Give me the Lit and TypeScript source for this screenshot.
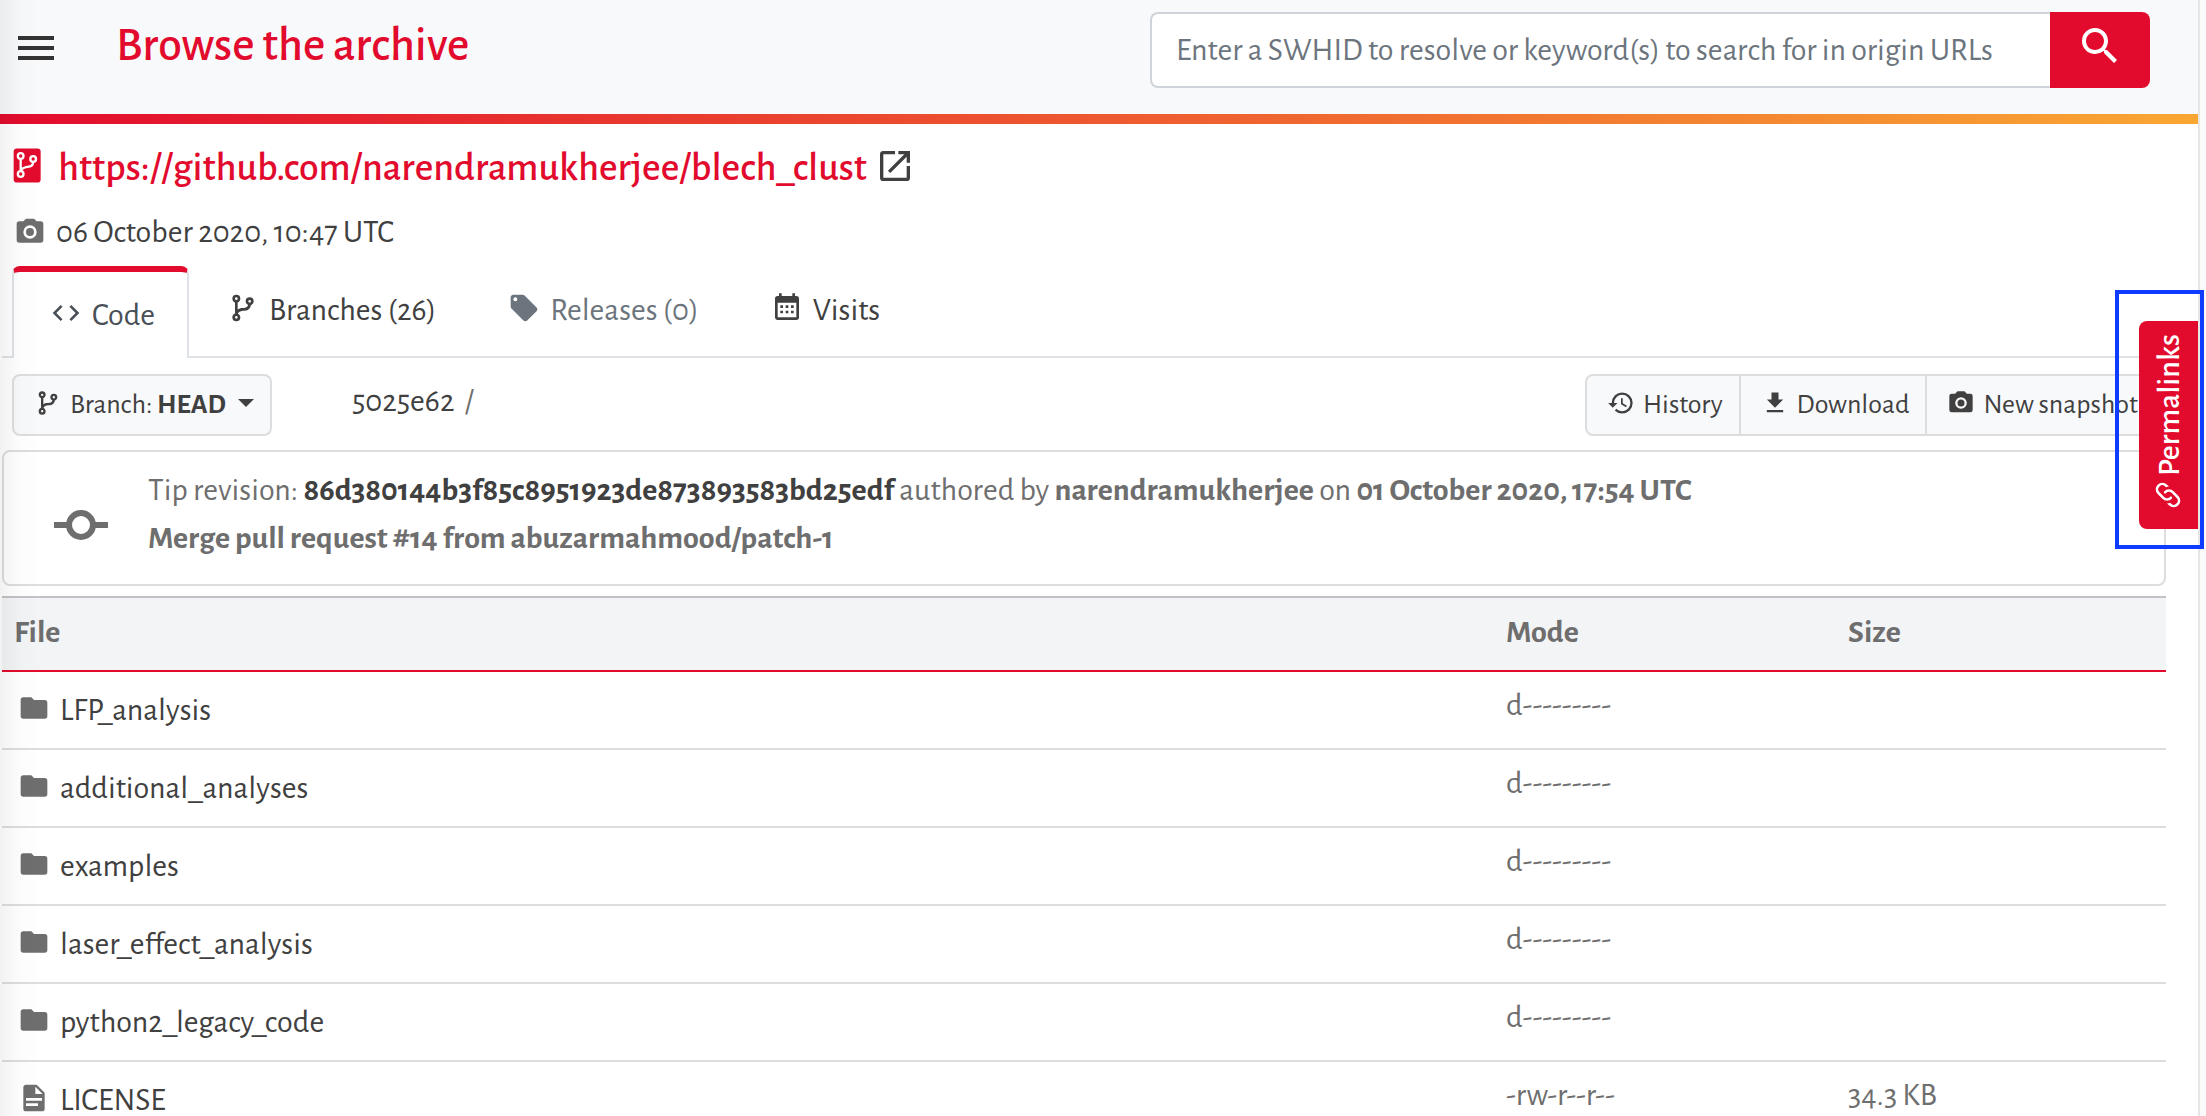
import { LitElement, html, css, svg } from "lit";
import { customElement } from "lit/decorators.js";

type IconName =
  | "menu" | "search" | "repo" | "camera" | "external" | "code" | "branch"
  | "tag" | "calendar" | "history" | "download" | "commit" | "folder" | "file" | "link";

const shapes: Record<IconName, unknown> = {
  menu: svg`<path d="M3 6h18v2H3zM3 11h18v2H3zM3 16h18v2H3z"/>`,
  search: svg`<path d="M9.500 3A6.500 6.500 0 0 1 16 9.500c0 1.610-.590 3.090-1.560 4.230l.270.270h.790l5 5-1.500 1.500-5-5v-.790l-.270-.270A6.516 6.516 0 0 1 9.500 16 6.500 6.500 0 0 1 3 9.500 6.500 6.500 0 0 1 9.500 3m0 2C7 5 5 7 5 9.500S7 14 9.500 14 14 12 14 9.500 12 5 9.500 5z"/>`,
  repo: svg`<rect x="2.200" y="1.500" width="16.200" height="20.400" rx="2"/><g fill="none" stroke="#fff" stroke-width="1.400"><circle cx="6.400" cy="6" r="1.700"/><circle cx="13.900" cy="7.800" r="1.700"/><circle cx="6.400" cy="16.800" r="1.700"/><path d="M6.400 7.700v7.400M13.900 9.500c0 3.200-2.600 2.700-5 3.400-1.500.5-2.300 1.200-2.500 2.200"/></g>`,
  camera: svg`<path d="M4 4h3l2-2h6l2 2h3a2 2 0 0 1 2 2v12a2 2 0 0 1-2 2H4a2 2 0 0 1-2-2V6a2 2 0 0 1 2-2m8 3a5 5 0 0 0-5 5 5 5 0 0 0 5 5 5 5 0 0 0 5-5 5 5 0 0 0-5-5m0 2a3 3 0 0 1 3 3 3 3 0 0 1-3 3 3 3 0 0 1-3-3 3 3 0 0 1 3-3z"/>`,
  external: svg`<path d="M14 3v2h3.590l-9.830 9.830 1.410 1.410L19 6.410V10h2V3m-2 16H5V5h7V3H5a2 2 0 0 0-2 2v14a2 2 0 0 0 2 2h14a2 2 0 0 0 2-2v-7h-2v7z"/>`,
  code: svg`<path d="M14.600 16.600 19.200 12l-4.600-4.600L16 6l6 6-6 6-1.400-1.400m-5.200 0L4.800 12l4.600-4.600L8 6l-6 6 6 6 1.400-1.400z"/>`,
  branch: svg`<path d="M13,14C9.640,14 8.540,15.350 8.180,16.240C9.250,16.700 10,17.760 10,19A3,3 0 0,1 7,22A3,3 0 0,1 4,19C4,17.690 4.830,16.580 6,16.170V7.830C4.830,7.420 4,6.310 4,5A3,3 0 0,1 7,2A3,3 0 0,1 10,5C10,6.310 9.170,7.420 8,7.830V13.120C8.880,12.470 10.160,12 12,12C14.670,12 15.560,10.660 15.850,9.770C14.770,9.320 14,8.250 14,7A3,3 0 0,1 17,4A3,3 0 0,1 20,7C20,8.340 19.120,9.500 17.910,9.860C17.650,11.290 16.680,14 13,14M7,18A1,1 0 0,0 6,19A1,1 0 0,0 7,20A1,1 0 0,0 8,19A1,1 0 0,0 7,18M7,4A1,1 0 0,0 6,5A1,1 0 0,0 7,6A1,1 0 0,0 8,5A1,1 0 0,0 7,4M17,6A1,1 0 0,0 16,7A1,1 0 0,0 17,8A1,1 0 0,0 18,7A1,1 0 0,0 17,6Z"/>`,
  tag: svg`<path d="M5.500 7A1.500 1.500 0 0 1 4 5.500 1.500 1.500 0 0 1 5.500 4 1.500 1.500 0 0 1 7 5.500 1.500 1.500 0 0 1 5.500 7m15.910 4.580-9-9C12.050 2.220 11.550 2 11 2H4c-1.110 0-2 .890-2 2v7c0 .550.220 1.050.590 1.410l8.990 9c.370.360.870.590 1.420.590s1.050-.230 1.410-.590l7-7c.370-.360.590-.860.590-1.410 0-.560-.230-1.060-.590-1.420z"/>`,
  calendar: svg`<path d="M9,10V12H7V10H9M13,10V12H11V10H13M17,10V12H15V10H17M19,3A2,2 0 0,1 21,5V19A2,2 0 0,1 19,21H5C3.890,21 3,20.100 3,19V5A2,2 0 0,1 5,3H6V1H8V3H16V1H18V3H19M19,19V8H5V19H19M9,14V16H7V14H9M13,14V16H11V14H13M17,14V16H15V14H17Z"/>`,
  history: svg`<path d="M13.500 8H12v5l4.280 2.540.720-1.210-3.500-2.080V8M13 3a9 9 0 0 0-9 9H1l3.960 4.030L9 12H6a7 7 0 0 1 7-7 7 7 0 0 1 7 7 7 7 0 0 1-7 7c-1.930 0-3.680-.790-4.940-2.060l-1.420 1.420A8.896 8.896 0 0 0 13 21a9 9 0 0 0 9-9 9 9 0 0 0-9-9z"/>`,
  download: svg`<path d="M5 20h14v-2H5m14-9h-4V3H9v6H5l7 7 7-7z"/>`,
  commit: svg`<g fill="none" stroke="currentColor" stroke-width="2.667"><circle cx="12" cy="12" r="5.333"/><path d="M0 12h6.600M17.400 12H24"/></g>`,
  folder: svg`<path d="M10 4H4a2 2 0 0 0-2 2v12a2 2 0 0 0 2 2h16a2 2 0 0 0 2-2V8a2 2 0 0 0-2-2h-8l-2-2z"/>`,
  file: svg`<path d="M13 9h5.500L13 3.500V9M6 2h8l6 6v12a2 2 0 0 1-2 2H6a2 2 0 0 1-2-2V4c0-1.110.890-2 2-2m9 16v-2H6v2h9m3-4v-2H6v2h12z"/>`,
  link: svg`<path d="M10.590 13.410c.410.390.410 1.030 0 1.420-.390.390-1.030.390-1.420 0a5.003 5.003 0 0 1 0-7.070l3.540-3.540a5.003 5.003 0 0 1 7.070 0 5.003 5.003 0 0 1 0 7.070l-1.490 1.490c.010-.820-.120-1.640-.400-2.420l.470-.480a2.982 2.982 0 0 0 0-4.240 2.982 2.982 0 0 0-4.240 0l-3.530 3.530a2.982 2.982 0 0 0 0 4.240m2.820-4.240c.390-.390 1.030-.390 1.420 0a5.003 5.003 0 0 1 0 7.070l-3.540 3.540a5.003 5.003 0 0 1-7.070 0 5.003 5.003 0 0 1 0-7.070l1.490-1.490c-.010.820.120 1.640.400 2.430l-.470.470a2.982 2.982 0 0 0 0 4.240 2.982 2.982 0 0 0 4.240 0l3.530-3.530a2.982 2.982 0 0 0 0-4.240.973.973 0 0 1 0-1.420z"/>`,
};

const icon = (name: IconName) =>
  html`<svg class="icon icon-${name}" viewBox="0 0 24 24" aria-hidden="true">${shapes[name]}</svg>`;

interface Entry { name: string; mode: string; size: string; kind: "folder" | "file"; }

const entries: Entry[] = [
  { name: "LFP_analysis", mode: "d---------", size: "", kind: "folder" },
  { name: "additional_analyses", mode: "d---------", size: "", kind: "folder" },
  { name: "examples", mode: "d---------", size: "", kind: "folder" },
  { name: "laser_effect_analysis", mode: "d---------", size: "", kind: "folder" },
  { name: "python2_legacy_code", mode: "d---------", size: "", kind: "folder" },
  { name: "LICENSE", mode: "-rw-r--r--", size: "34.3 KB", kind: "file" },
];

@customElement("app-root")
export class AppRoot extends LitElement {
  static styles = css`
    :host {
      display: block;
      position: relative;
      height: 100vh;
      overflow: hidden;
      background: #fafafa;
      color: #6e6e6e;
      font: 32px/38px "Alegreya Sans", Lato, "Liberation Sans", sans-serif;
      font-variant-numeric: oldstyle-nums;
    }
    /* Soft shadow cast by the collapsed sidebar */
    :host::before {
      content: "";
      position: absolute;
      inset: 0 auto 0 0;
      width: 40px;
      background: linear-gradient(90deg, rgba(0, 0, 0, 0.05), rgba(0, 0, 0, 0.01) 50%, transparent);
      pointer-events: none;
    }
    * { box-sizing: border-box; }
    a { color: #404040; text-decoration: none; }
    button, input { font: inherit; color: inherit; margin: 0; }
    button { cursor: pointer; }
    .icon { width: 32px; height: 32px; margin-bottom: 4px; fill: currentColor; flex: none; display: block; }
    .page { margin-right: 6px; border-right: 2px solid #e6e6e6; min-height: 100vh; background: #fff; }

    .top {
      display: flex;
      align-items: flex-start;
      height: 124px;
      padding: 12px 48px 0 12px;
      background: #f8f9fb;
      border-bottom: 10px solid;
      border-image: linear-gradient(90deg, #e20b2d, #f9a733) 1;
    }
    .toggle { padding: 12px 0 0; border: 0; background: none; color: #333; }
    .icon-menu, .icon-search { width: 48px; height: 48px; margin: 0; }
    h1 { margin: 6px 0 0 56px; font-size: 48px; line-height: 56px; font-weight: 500; color: #e20b2d; }
    .search { display: flex; width: 1000px; height: 76px; margin-left: auto; }
    .query {
      flex: 1;
      min-width: 0;
      padding: 0 24px;
      background: #fff;
      border: 2px solid #ced4da;
      border-right: 0;
      border-radius: 8px 0 0 8px;
    }
    .query::placeholder { color: #6c757d; opacity: 1; }
    .go {
      display: grid;
      place-items: center;
      width: 100px;
      padding: 0 0 8px;
      border: 0;
      border-radius: 0 8px 8px 0;
      background: #e20b2d;
      color: #fff;
    }

    .origin { display: flex; align-items: center; height: 88px; padding-left: 10px; gap: 8px; font-size: 40px; font-weight: 500; }
    .origin a, .icon-repo { color: #e20b2d; }
    .icon-repo, .icon-external { width: 40px; height: 40px; }
    .icon-external { color: #404040; }
    .visit { display: flex; align-items: center; height: 40px; padding-left: 14px; gap: 10px; }
    .visit .icon { margin: 0; }

    .tabs { display: flex; height: 92px; margin: 14px 0 0 2px; padding-left: 10px; border-bottom: 2px solid #dee2e6; }
    .tab { display: flex; align-items: center; gap: 10px; height: 88px; padding: 0 34px 0 38px; }
    .active {
      height: 92px;
      padding: 0 32px 0 36px;
      background: #fff;
      border: 2px solid #dee2e6;
      border-top: 6px solid #e20b2d;
      border-bottom: 0;
      border-radius: 8px 8px 0 0;
      color: #495057;
    }
    .disabled { color: #6c757d; }

    .actions { display: flex; align-items: center; padding: 16px 42px 14px 12px; }
    .select, .group { display: flex; height: 62px; background: #f8f9fb; border: 2px solid #ddd; border-radius: 8px; font-size: 28px; color: #404040; }
    .select { align-items: center; padding: 0 16px 0 20px; gap: 8px; }
    .actions .icon { width: 28px; height: 28px; }
    .caret { margin: 0 0 4px 4px; border: 8px solid transparent; border-top-color: currentColor; border-bottom: 0; }
    .crumbs { display: flex; gap: 10px; margin: 0 0 8px 80px; }
    .group { margin-left: auto; }
    .group button { display: flex; align-items: center; gap: 8px; padding: 0 16px 0 20px; border: 0; border-left: 2px solid #ddd; background: none; }
    .group button:first-child { border-left: 0; }

    .revision {
      display: flex;
      align-items: center;
      height: 136px;
      margin: 0 32px 10px 2px;
      padding: 14px 50px 0;
      gap: 40px;
      border: 2px solid #ddd;
      border-radius: 8px;
    }
    .summary { align-self: flex-start; line-height: 48px; }
    .summary p { margin: 0; }
    .icon-commit { width: 54px; height: 54px; margin: 0; }

    table { width: calc(100% - 34px); margin-left: 2px; border-spacing: 0; table-layout: fixed; }
    th { height: 76px; padding: 0 12px 4px; text-align: left; background: #f3f4f6; border-top: 2px solid #c0c2c5; border-bottom: 2px solid #e20b2d; }
    td { padding: 12px; line-height: 42px; vertical-align: top; border-bottom: 2px solid #ddd; }
    .mode { width: 342px; }
    .size { width: 330px; }
    .entry { display: flex; align-items: center; gap: 10px; padding-left: 4px; line-height: 52px; }
    .entry .icon, .visit .icon { color: #6e6e6e; }

    .drawer {
      position: absolute;
      top: 290px;
      right: 2px;
      width: 89px;
      height: 259px;
      padding: 27px 2px 0 20px;
      border: 4px solid #0d3bff;
    }
    .permalinks {
      display: flex;
      align-items: center;
      gap: 3px;
      width: 59px;
      height: 208px;
      padding: 18px 0;
      writing-mode: vertical-rl;
      transform: rotate(180deg);
      border: 0;
      border-radius: 0 8px 8px 0;
      background: #e20b2d;
      color: #fff;
      font-weight: 500;
    }
    .icon-link { margin: 0; transform: rotate(90deg); }
  `;

  render() {
    return html`
      <div class="page">
        <header class="top">
          <button class="toggle" aria-label="Toggle menu">${icon("menu")}</button>
          <h1>Browse the archive</h1>
          <form class="search">
            <input class="query" type="text" aria-label="Search"
              placeholder="Enter a SWHID to resolve or keyword(s) to search for in origin URLs" />
            <button class="go" type="button" aria-label="Search">${icon("search")}</button>
          </form>
        </header>
        <main>
          <div class="origin">${icon("repo")}<a href="#origin">https://github.com/narendramukherjee/blech_clust</a>${icon("external")}</div>
          <div class="visit">${icon("camera")}<a href="#snapshot">06 October 2020, 10:47 UTC</a></div>
          <nav class="tabs">
            <a class="tab active" href="#code">${icon("code")}Code</a>
            <a class="tab" href="#branches">${icon("branch")}Branches (26)</a>
            <a class="tab disabled" href="#releases">${icon("tag")}Releases (0)</a>
            <a class="tab" href="#visits">${icon("calendar")}Visits</a>
          </nav>
          <div class="actions">
            <button class="select">${icon("branch")}<span>Branch: <b>HEAD</b></span><span class="caret"></span></button>
            <div class="crumbs"><a href="#root">5025e62</a><span>/</span></div>
            <div class="group">
              <button>${icon("history")}History</button>
              <button>${icon("download")}Download</button>
              <button>${icon("camera")}New snapshot</button>
            </div>
          </div>
          <section class="revision">
            ${icon("commit")}
            <div class="summary">
              <p>Tip revision: <a href="#revision"><b>86d380144b3f85c8951923de873893583bd25edf</b></a> authored by <b>narendramukherjee</b> on <b>01 October 2020, 17:54 UTC</b></p>
              <p><b>Merge pull request #14 from abuzarmahmood/patch-1</b></p>
            </div>
          </section>
          <table>
            <thead><tr><th>File</th><th class="mode">Mode</th><th class="size">Size</th></tr></thead>
            <tbody>
              ${entries.map((e) => html`<tr>
                <td><a class="entry" href="#${e.name}">${icon(e.kind)}${e.name}</a></td>
                <td>${e.mode}</td><td>${e.size}</td>
              </tr>`)}
            </tbody>
          </table>
        </main>
      </div>
      <div class="drawer"><button class="permalinks">${icon("link")}Permalinks</button></div>
    `;
  }
}
